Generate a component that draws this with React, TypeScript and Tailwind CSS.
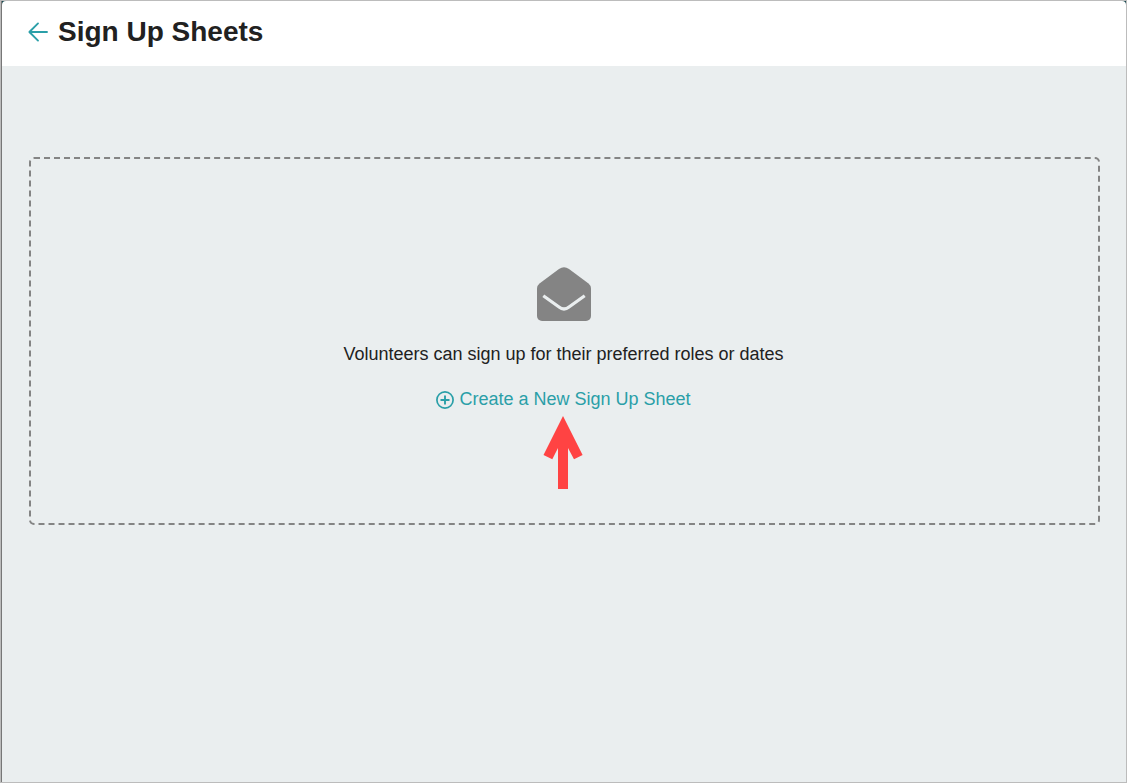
function BackArrow() {
  return (
    <svg
      viewBox="0 0 20 20"
      className="size-5"
      fill="none"
      stroke="currentColor"
      strokeWidth="1.9"
      strokeLinecap="round"
      strokeLinejoin="round"
      aria-hidden="true"
    >
      <path d="M19 10H2M10 1.4L1.400 10L10 18.600" />
    </svg>
  );
}

function OpenEnvelope() {
  return (
    <svg viewBox="0 0 54 54" className="size-[54px] text-[#848484]" aria-hidden="true">
      <path
        fill="currentColor"
        d="M0 49V21.5Q0 18.5 2.500 16.500L22 2Q27 -1.500 32 2L51.500 16.500Q54 18.500 54 21.500V49A5 5 0 0 1 49 54H5A5 5 0 0 1 0 49Z"
      />
      <path
        fill="none"
        stroke="#eaeeef"
        strokeWidth="3.200"
        d="M6.300 28.800L22 40Q27 44 32 40L47.700 28.800"
      />
    </svg>
  );
}

function PlusCircle() {
  return (
    <svg
      viewBox="0 0 18 18"
      className="size-[18px]"
      fill="none"
      stroke="currentColor"
      strokeWidth="1.7"
      aria-hidden="true"
    >
      <circle cx="9" cy="9" r="8.100" />
      <path d="M9 4.500V13.500M4.500 9H13.500" strokeWidth="1.900" />
    </svg>
  );
}

function Pointer() {
  return (
    <svg
      viewBox="0 0 40 74"
      className="pointer-events-none absolute top-[30px] left-1/2 h-[74px] w-10 -translate-x-5"
      aria-hidden="true"
    >
      <path fill="#ff4343" d="M20 0L39.600 39L31 43.200L25 32V73H15V32L9.300 43.200L.5 39Z" />
    </svg>
  );
}

export default function App() {
  return (
    <div className="flex min-h-screen flex-col border border-[#bcbcbc] bg-[#1b4a50] font-['Liberation_Sans',Arial,sans-serif] text-[#212121]">
      <div className="flex grow flex-col border-l border-[#777777]">
        <header className="flex h-[65px] items-center gap-[10px] rounded-tl-sm rounded-tr-sm bg-white pr-7 pb-1 pl-[26px]">
          <a href="#back" aria-label="Back" className="text-[#2a9fa8]">
            <BackArrow />
          </a>
          <h1 className="text-[28px] leading-9 font-bold">Sign Up Sheets</h1>
        </header>
        <main className="grow bg-[#eaeeef] pt-[91px] pr-[26px] pb-7 pl-[27px]">
          <section className="flex flex-col items-center rounded-[5px] border-2 border-dashed border-[#848484] pt-[108px] pr-[26px] pb-[110px] pl-6">
            <OpenEnvelope />
            <p className="mt-5 text-center text-lg leading-[27px]">
              Volunteers can sign up for their preferred roles or dates
            </p>
            <div className="relative mt-[18px]">
              <button
                type="button"
                className="flex cursor-pointer items-center gap-[5px] text-lg leading-[27px] text-[#2a9fa8]"
              >
                <PlusCircle />
                Create a New Sign Up Sheet
              </button>
              <Pointer />
            </div>
          </section>
        </main>
      </div>
    </div>
  );
}
